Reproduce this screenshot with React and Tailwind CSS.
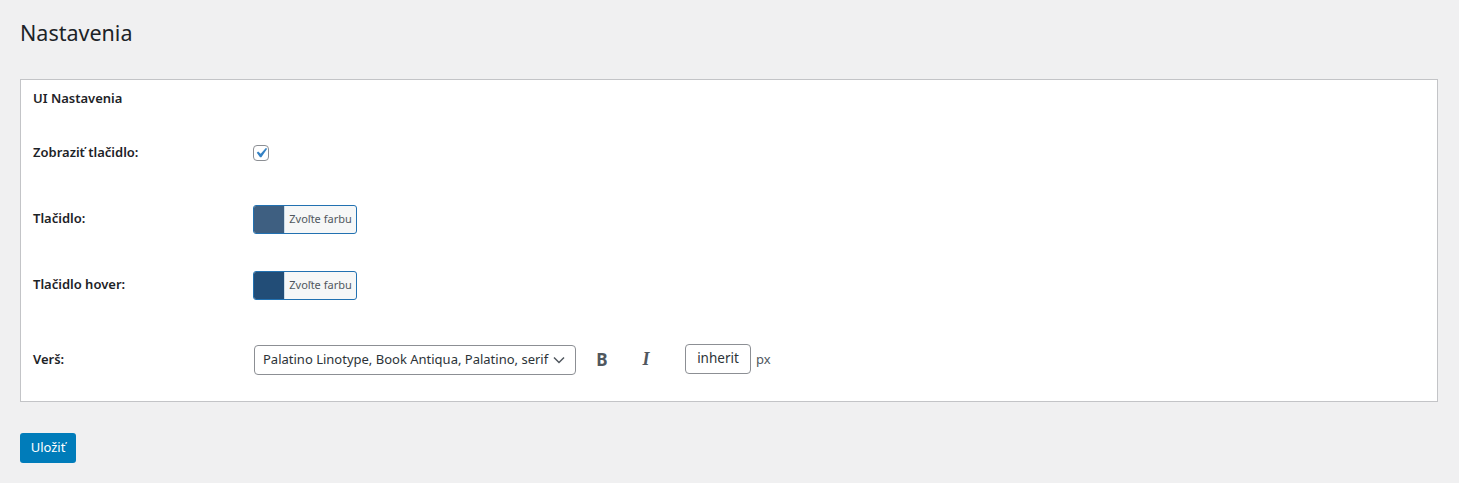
import React from "react";

const font = { fontFamily: '"Noto Sans", "Open Sans", sans-serif' };

function ColorBtn({ color }) {
  return (
    <button className="flex h-[29px] w-[104px] overflow-hidden rounded-[3px] border border-[#2271b1] bg-[#f6f7f7] p-0">
      <span className="h-full w-[30px]" style={{ backgroundColor: color }} />
      <span className="flex h-full flex-1 items-center justify-center border-l border-[#2271b1]/20 text-[11px] text-[#50575e]">
        Zvoľte farbu
      </span>
    </button>
  );
}

function Row({ label, h, children }) {
  return (
    <div className={`flex items-center ${h}`}>
      <div className="w-[232px] shrink-0 pl-[12px] text-[13px] font-semibold text-[#1d2327]">{label}</div>
      <div className="flex items-center">{children}</div>
    </div>
  );
}

export default function App() {
  return (
    <div className="min-h-[483px] bg-[#f0f0f1] pl-5 pr-[21px] pt-[18px]" style={font}>
      <h1 className="h-[29px] text-[21.5px] font-normal leading-[29px] text-[#1d2327]">Nastavenia</h1>
      <div className="mt-[32px] border border-[#c3c4c7] bg-white">
        <div className="h-[40px] pl-[12px] pt-[9px] text-[13px] font-semibold leading-[18px] text-[#1d2327]">
          UI Nastavenia
        </div>
        <Row label="Zobraziť tlačidlo:" h="h-[66px]">
          <span className="relative flex h-4 w-4 items-center justify-center rounded-[4px] border border-[#8c8f94] bg-white">
            <svg width="20" height="20" viewBox="0 0 20 20" className="absolute left-[-3px] top-[-3px]">
              <path d="M14.83 4.89l1.34.94-5.81 8.38H9.02L5.78 9.67l1.34-1.25 2.57 2.4z" fill="#3582c4" />
            </svg>
          </span>
        </Row>
        <Row label="Tlačidlo:" h="h-[66px]">
          <ColorBtn color="#3e5f81" />
        </Row>
        <Row label="Tlačidlo hover:" h="h-[66px]">
          <ColorBtn color="#224d77" />
        </Row>
        <Row label="Verš:" h="h-[83px]">
          <div className="ml-px flex h-[30px] w-[322px] items-center justify-between rounded-[4px] border border-[#8c8f94] bg-white pl-[8px] pr-[8px] text-[13px] text-[#2c3338]">
            <span>Palatino Linotype, Book Antiqua, Palatino, serif</span>
            <svg width="16" height="16" viewBox="0 0 16 16" fill="none" stroke="#50575e" strokeWidth="1.5">
              <path d="M3 5.5l5 5 5-5" />
            </svg>
          </div>
          <span className="ml-[20px] w-[12px] text-center text-[17px] font-bold text-[#50575e]">B</span>
          <span
            className="ml-[32px] w-[12px] text-center text-[18px] font-bold italic text-[#50575e]"
            style={{ fontFamily: '"Liberation Serif", serif' }}
          >
            I
          </span>
          <div className="-mt-[2px] ml-[33px] flex h-[30px] w-[66px] items-center justify-center rounded-[4px] border border-[#8c8f94] bg-white text-[13.5px] text-[#2c3338]">
            inherit
          </div>
          <span className="ml-[5px] text-[13px] text-[#50575e]">px</span>
        </Row>
      </div>
      <button className="mt-[31px] h-[30px] w-[56px] rounded-[3px] bg-[#007cba] text-[13px] text-white">
        Uložiť
      </button>
    </div>
  );
}
